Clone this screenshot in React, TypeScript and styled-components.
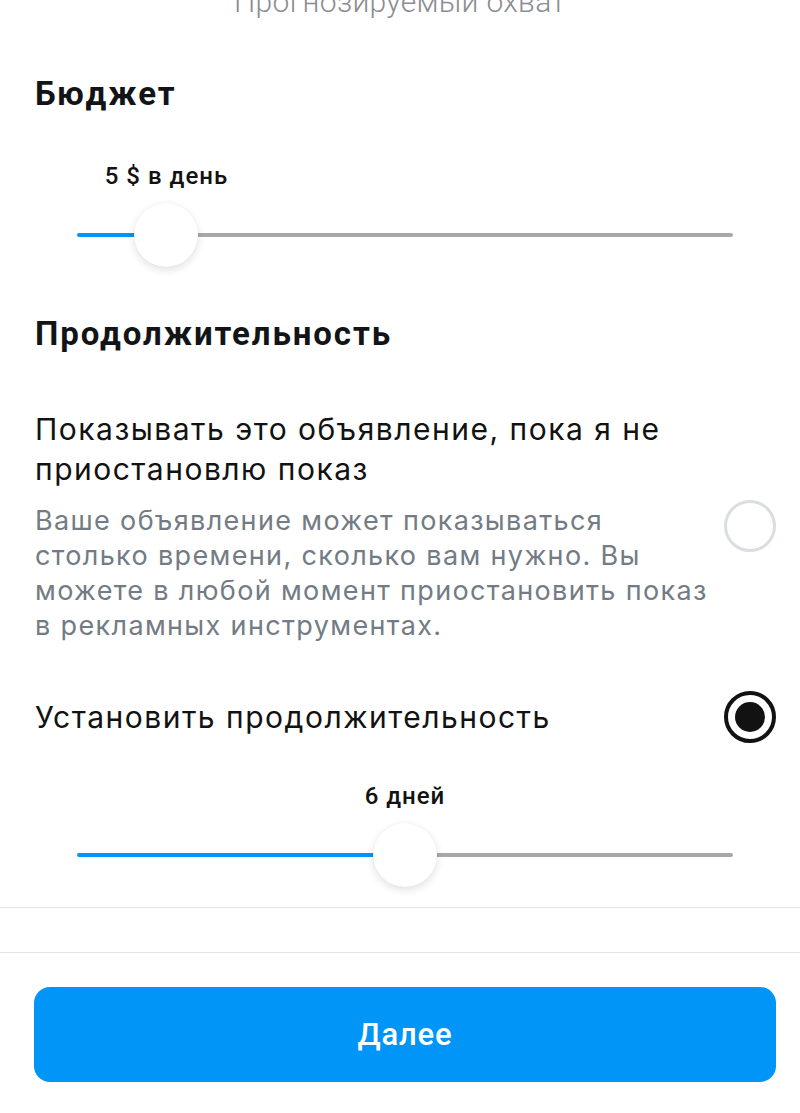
import React from "react";
import styled, { createGlobalStyle } from "styled-components";

const Global = createGlobalStyle`
  html, body { margin: 0; padding: 0; background: #ffffff; }
  body {
    font-family: Inter, "Noto Sans", sans-serif;
    color: #121212;
    -webkit-font-smoothing: antialiased;
  }
  * { box-sizing: border-box; }
`;

const Page = styled.div`
  width: 800px;
  height: 1113px;
  overflow: hidden;
  display: flex;
  flex-direction: column;
  background: #ffffff;
`;

const ReachCaption = styled.div`
  margin-top: -13px;
  text-align: center;
  font-family: Roboto, sans-serif;
  font-weight: 300;
  font-size: 30px;
  line-height: 30px;
  letter-spacing: 0.3px;
  color: #8a8d91;
`;

const SectionTitle = styled.h2<{ $top: number }>`
  margin: ${(p) => p.$top}px 0 0 0;
  padding-left: 35px;
  font-family: Roboto, sans-serif;
  font-weight: 700;
  font-size: 33px;
  line-height: 40px;
  letter-spacing: 1.9px;
  color: #121417;
`;

const SliderBlock = styled.div<{ $top: number }>`
  margin: ${(p) => p.$top}px 67px 0 77px;
  display: flex;
  flex-direction: column;
  gap: 14px;
`;

const LabelRow = styled.div`
  position: relative;
  height: 26px;
`;

const ValueLabel = styled.span`
  position: absolute;
  top: 0;
  transform: translateX(-50%);
  white-space: nowrap;
  font-family: Roboto, sans-serif;
  font-weight: 500;
  font-size: 24px;
  line-height: 26px;
  letter-spacing: 1px;
  color: #121212;
`;

const TrackArea = styled.div`
  position: relative;
  height: 64px;
  display: flex;
  align-items: center;
`;

const Track = styled.div`
  width: 100%;
  height: 4px;
  display: flex;
  border-radius: 2px;
  overflow: hidden;
`;

const TrackFill = styled.div`
  height: 100%;
  background: #0095f6;
`;

const TrackRest = styled.div`
  flex: 1;
  height: 100%;
  background: #a8a8a8;
`;

const Thumb = styled.div`
  position: absolute;
  top: 0;
  width: 64px;
  height: 64px;
  border-radius: 50%;
  background: #ffffff;
  transform: translateX(-50%);
  box-shadow: 0 3px 8px rgba(0, 0, 0, 0.12), 0 0 1px rgba(0, 0, 0, 0.08);
`;

const OptionRow = styled.div<{ $top: number }>`
  margin: ${(p) => p.$top}px 24px 0 35px;
  display: flex;
  align-items: center;
  gap: 12px;
`;

const OptionText = styled.div`
  flex: 1;
  display: flex;
  flex-direction: column;
  gap: 14px;
`;

const OptionTitle = styled.div`
  font-size: 30px;
  line-height: 40px;
  font-weight: 400;
  letter-spacing: 1.5px;
  color: #121212;
`;

const OptionDesc = styled.div`
  font-size: 27px;
  line-height: 35px;
  font-weight: 400;
  letter-spacing: 1.35px;
  color: #737b84;
`;

const Radio = styled.div<{ $checked?: boolean }>`
  flex: none;
  width: 52px;
  height: 52px;
  border-radius: 50%;
  border: ${(p) => (p.$checked ? "4px solid #121212" : "3px solid #dadde1")};
  display: flex;
  align-items: center;
  justify-content: center;
`;

const RadioDot = styled.div`
  width: 30px;
  height: 30px;
  border-radius: 50%;
  background: #121212;
`;

const Divider = styled.div<{ $top: number }>`
  margin-top: ${(p) => p.$top}px;
  height: 1px;
  background: #e4e6ea;
`;

const PrimaryButton = styled.button`
  margin: 34px 24px 0 34px;
  height: 95px;
  border: none;
  border-radius: 16px;
  background: #0095f6;
  color: #ffffff;
  font-family: Roboto, sans-serif;
  font-weight: 500;
  font-size: 31px;
  letter-spacing: 0.8px;
  cursor: pointer;
`;

type SliderProps = { top: number; label: string; value: number };

function Slider({ top, label, value }: SliderProps) {
  const pct = `${value * 100}%`;
  return (
    <SliderBlock $top={top}>
      <LabelRow>
        <ValueLabel style={{ left: pct }}>{label}</ValueLabel>
      </LabelRow>
      <TrackArea>
        <Track>
          <TrackFill style={{ width: pct }} />
          <TrackRest />
        </Track>
        <Thumb style={{ left: pct }} />
      </TrackArea>
    </SliderBlock>
  );
}

export default function App() {
  return (
    <Page>
      <Global />
      <ReachCaption>Прогнозируемый охват</ReachCaption>
      <SectionTitle $top={57}>Бюджет</SectionTitle>
      <Slider top={49} label="5 $ в день" value={0.1364} />
      <SectionTitle $top={47}>Продолжительность</SectionTitle>
      <OptionRow $top={55}>
        <OptionText>
          <OptionTitle>Показывать это объявление, пока я не приостановлю показ</OptionTitle>
          <OptionDesc>
            Ваше объявление может показываться столько времени, сколько вам нужно. Вы можете в любой момент приостановить показ в рекламных инструментах.
          </OptionDesc>
        </OptionText>
        <Radio />
      </OptionRow>
      <OptionRow $top={48}>
        <OptionText>
          <OptionTitle>Установить продолжительность</OptionTitle>
        </OptionText>
        <Radio $checked>
          <RadioDot />
        </Radio>
      </OptionRow>
      <Slider top={40} label="6 дней" value={0.5} />
      <Divider $top={20} />
      <Divider $top={44} />
      <PrimaryButton>Далее</PrimaryButton>
    </Page>
  );
}
